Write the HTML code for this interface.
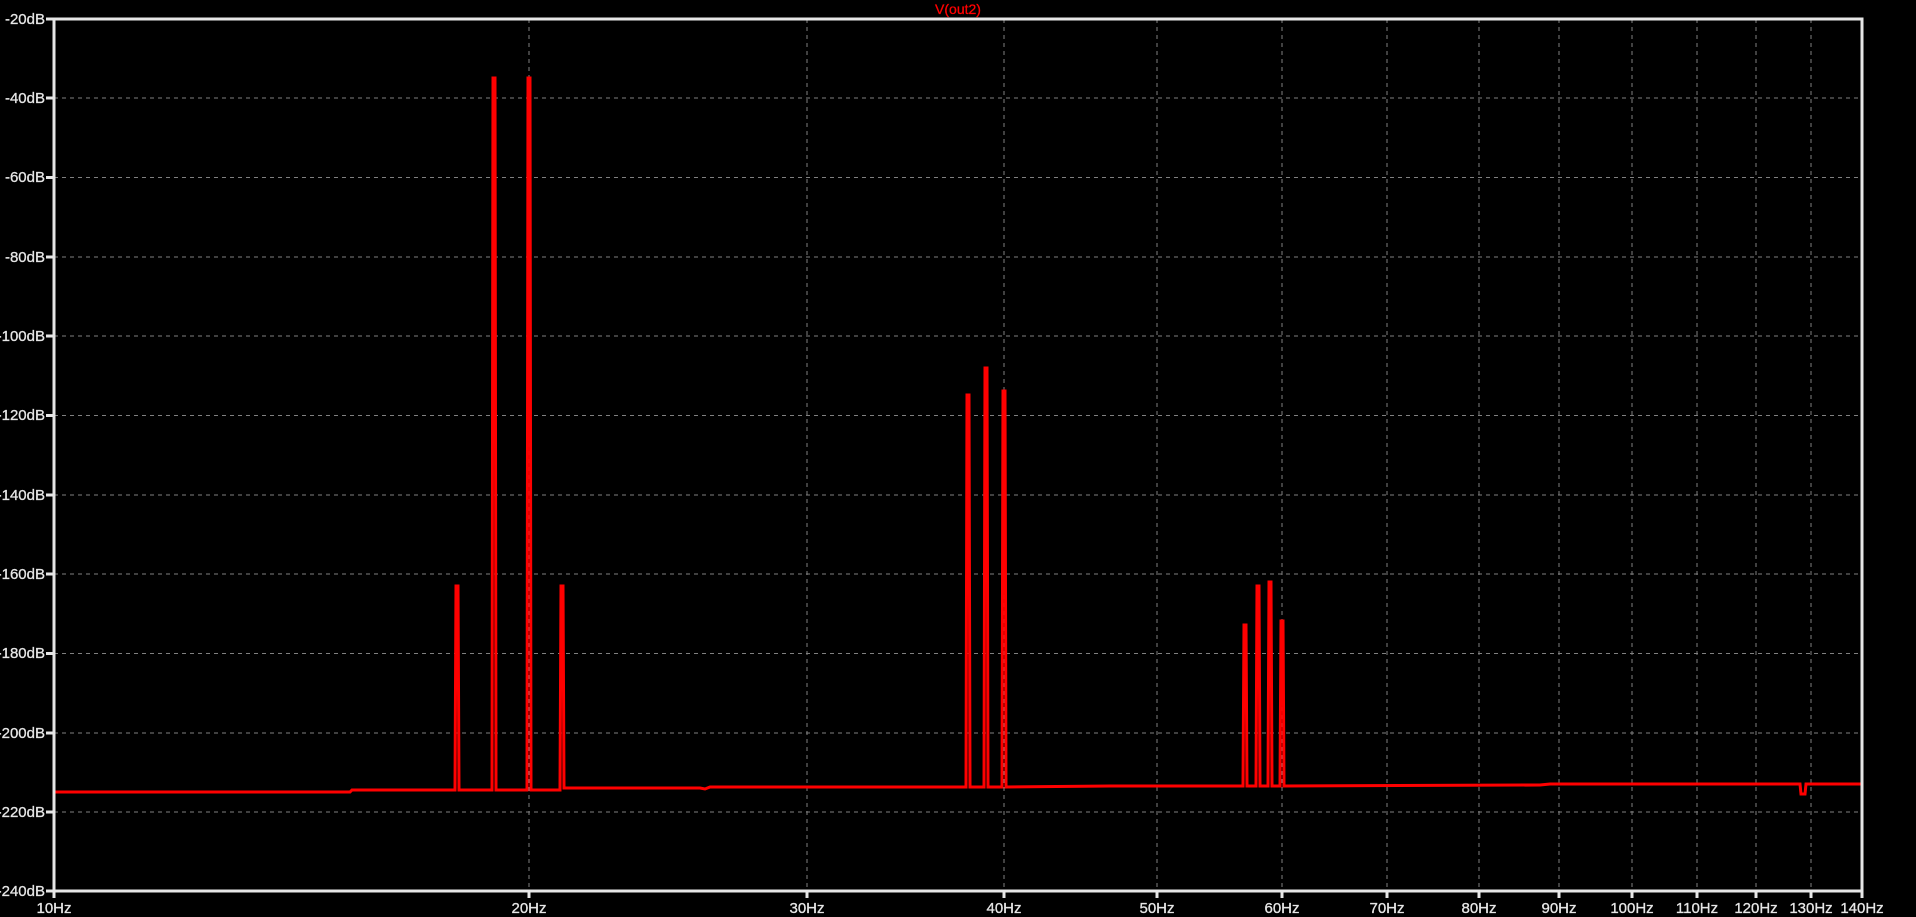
<!DOCTYPE html>
<html><head><meta charset="utf-8"><style>
html,body{margin:0;padding:0;background:#000;width:1916px;height:917px;overflow:hidden}
svg text{font-family:"Liberation Sans",sans-serif;font-size:15px;fill:#e6e6e6;stroke:#e6e6e6;stroke-width:0.3}
</style></head><body>
<svg width="1916" height="917" xmlns="http://www.w3.org/2000/svg">
<g stroke="#808080" stroke-width="1" stroke-dasharray="4,4" fill="none">
<line x1="54" x2="1862" y1="98" y2="98"/><line x1="54" x2="1862" y1="177.5" y2="177.5"/>
<line x1="54" x2="1862" y1="257" y2="257"/><line x1="54" x2="1862" y1="336" y2="336"/>
<line x1="54" x2="1862" y1="415.5" y2="415.5"/><line x1="54" x2="1862" y1="495" y2="495"/>
<line x1="54" x2="1862" y1="574" y2="574"/><line x1="54" x2="1862" y1="653.5" y2="653.5"/>
<line x1="54" x2="1862" y1="733" y2="733"/><line x1="54" x2="1862" y1="812" y2="812"/>
<line y1="19" y2="891" x1="529" x2="529"/><line y1="19" y2="891" x1="807" x2="807"/>
<line y1="19" y2="891" x1="1004" x2="1004"/><line y1="19" y2="891" x1="1157" x2="1157"/>
<line y1="19" y2="891" x1="1282" x2="1282"/><line y1="19" y2="891" x1="1387" x2="1387"/>
<line y1="19" y2="891" x1="1479" x2="1479"/><line y1="19" y2="891" x1="1559" x2="1559"/>
<line y1="19" y2="891" x1="1632" x2="1632"/><line y1="19" y2="891" x1="1697" x2="1697"/>
<line y1="19" y2="891" x1="1756" x2="1756"/><line y1="19" y2="891" x1="1811" x2="1811"/>
</g>
<g stroke="#ff0000" stroke-width="3" fill="none" stroke-linejoin="miter">
<polyline points="54,792 350,792 352,790 455,790 456,586 458,586 459,790 492,790 493,78 495,78 496,790 527,790 528,78 530,78 531,790 560,790 561,586 563,586 564,788 700,788 705,789 710,787 870,787 966,787 967,395 969,395 970,787 984,787 985,368 987,368 988,787 1002,787 1003,391 1005,391 1006,787 1110,786 1243,786 1244,625 1246,625 1247,786 1256,786 1257,586 1259,586 1260,786 1268,786 1269,582 1271,582 1272,786 1280,786 1281,621 1283,621 1284,786 1540,785 1550,784 1800,784 1801,794 1805,794 1806,784 1862,784"/>
</g>
<g stroke="#e6e6e6" stroke-width="3" fill="none">
<rect x="54" y="19" width="1808" height="872"/>
</g>
<g stroke="#e6e6e6" stroke-width="3">
<line x1="46" x2="54" y1="19" y2="19"/><line x1="46" x2="54" y1="98" y2="98"/><line x1="46" x2="54" y1="177.5" y2="177.5"/><line x1="46" x2="54" y1="257" y2="257"/><line x1="46" x2="54" y1="336" y2="336"/><line x1="46" x2="54" y1="415.5" y2="415.5"/><line x1="46" x2="54" y1="495" y2="495"/><line x1="46" x2="54" y1="574" y2="574"/><line x1="46" x2="54" y1="653.5" y2="653.5"/><line x1="46" x2="54" y1="733" y2="733"/><line x1="46" x2="54" y1="812" y2="812"/><line x1="46" x2="54" y1="891" y2="891"/>
<line y1="891" y2="898" x1="54" x2="54"/><line y1="891" y2="898" x1="529" x2="529"/><line y1="891" y2="898" x1="807" x2="807"/><line y1="891" y2="898" x1="1004" x2="1004"/><line y1="891" y2="898" x1="1157" x2="1157"/><line y1="891" y2="898" x1="1282" x2="1282"/><line y1="891" y2="898" x1="1387" x2="1387"/><line y1="891" y2="898" x1="1479" x2="1479"/><line y1="891" y2="898" x1="1559" x2="1559"/><line y1="891" y2="898" x1="1632" x2="1632"/><line y1="891" y2="898" x1="1697" x2="1697"/><line y1="891" y2="898" x1="1756" x2="1756"/><line y1="891" y2="898" x1="1811" x2="1811"/><line y1="891" y2="898" x1="1862" x2="1862"/>
</g>
<g text-anchor="end">
<text x="45" y="24">-20dB</text><text x="45" y="103">-40dB</text><text x="45" y="182">-60dB</text><text x="45" y="262">-80dB</text><text x="45" y="341">-100dB</text><text x="45" y="420">-120dB</text><text x="45" y="500">-140dB</text><text x="45" y="579">-160dB</text><text x="45" y="658">-180dB</text><text x="45" y="738">-200dB</text><text x="45" y="817">-220dB</text><text x="45" y="896">-240dB</text>
</g>
<g text-anchor="middle" style="font-size:16px">
<text x="54" y="913">10Hz</text><text x="529" y="913">20Hz</text><text x="807" y="913">30Hz</text><text x="1004" y="913">40Hz</text><text x="1157" y="913">50Hz</text><text x="1282" y="913">60Hz</text><text x="1387" y="913">70Hz</text><text x="1479" y="913">80Hz</text><text x="1559" y="913">90Hz</text><text x="1632" y="913">100Hz</text><text x="1697" y="913">110Hz</text><text x="1756" y="913">120Hz</text><text x="1811" y="913">130Hz</text><text x="1862" y="913">140Hz</text>
</g>
<text x="958" y="14" text-anchor="middle" style="fill:#ff0000;stroke:#ff0000;font-size:14px">V(out2)</text>
</svg>
</body></html>
